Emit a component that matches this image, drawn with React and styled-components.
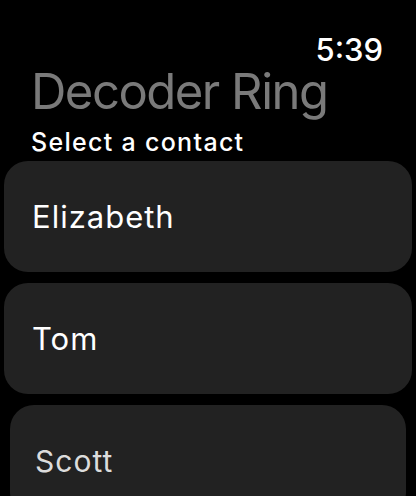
import React from "react";
import styled, { createGlobalStyle } from "styled-components";

const GlobalStyle = createGlobalStyle`
  html, body {
    margin: 0;
    padding: 0;
    background: #000;
  }
  body {
    font-family: Inter, "Noto Sans", sans-serif;
    -webkit-font-smoothing: antialiased;
  }
`;

const Screen = styled.div`
  width: 416px;
  height: 496px;
  overflow: hidden;
  background: #000;
  display: flex;
  flex-direction: column;
`;

const StatusBar = styled.div`
  display: flex;
  justify-content: flex-end;
  padding: 33px 33px 0 0;
  height: 34px;
`;

const Time = styled.span`
  color: #fff;
  font-size: 31px;
  font-weight: 500;
  line-height: 34px;
`;

const Title = styled.h1`
  margin: 0;
  padding-left: 31px;
  color: #7a7a7a;
  font-size: 49px;
  font-weight: 400;
  line-height: 50px;
  letter-spacing: -1.5px;
`;

const Subtitle = styled.h2`
  margin: 0;
  padding: 10px 0 0 31px;
  color: #fff;
  font-size: 25px;
  font-weight: 500;
  line-height: 30px;
  letter-spacing: 1.3px;
`;

const List = styled.div`
  display: flex;
  flex-direction: column;
  align-items: center;
  gap: 11px;
  padding-top: 4px;
`;

const Card = styled.button`
  box-sizing: border-box;
  width: ${(p) => (p.$far ? "396px" : "408px")};
  height: 111px;
  flex-shrink: 0;
  border: none;
  border-radius: 24px;
  background: #222222;
  display: flex;
  align-items: center;
  padding: 0 0 0 ${(p) => (p.$far ? "25px" : "28px")};
  font-family: inherit;
  font-size: ${(p) => (p.$far ? "30px" : "31px")};
  font-weight: 400;
  color: ${(p) => (p.$far ? "#dcdcdc" : "#fff")};
  letter-spacing: 1px;
  text-align: left;
`;

const contacts = ["Elizabeth", "Tom", "Scott"];

export default function App() {
  return (
    <>
      <GlobalStyle />
      <Screen>
        <StatusBar>
          <Time>5:39</Time>
        </StatusBar>
        <Title>Decoder Ring</Title>
        <Subtitle>Select a contact</Subtitle>
        <List>
          {contacts.map((name, i) => (
            <Card key={name} $far={i === 2}>
              {name}
            </Card>
          ))}
        </List>
      </Screen>
    </>
  );
}
